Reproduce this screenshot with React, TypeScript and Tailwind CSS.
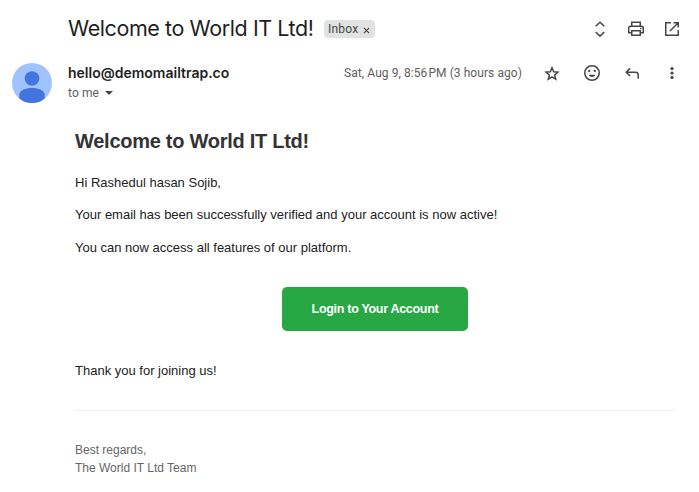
import type { ReactNode } from "react";

function Icon({ children }: { children: ReactNode }) {
  return (
    <svg viewBox="0 0 20 20" className="block size-5 shrink-0" fill="none" stroke="#444746" strokeWidth="1.5">
      {children}
    </svg>
  );
}

function SubjectBar() {
  return (
    <header className="flex h-[58px] items-center pl-[68px] pr-[17px]">
      <h1 className="w-[256px] whitespace-nowrap pb-0.5 font-['Inter','Liberation_Sans',sans-serif] text-[21.5px] font-normal leading-7 tracking-[-0.42px] text-[#1f1f1f]">
        Welcome to World IT Ltd!
      </h1>
      <span className="flex h-[18px] w-[51px] items-center rounded bg-[#e0e3e1] pl-1 font-['Roboto',sans-serif] text-xs text-[#444746]">
        <span className="w-[35px] tracking-[0.2px]">Inbox</span>
        <svg viewBox="0 0 8 8" className="mt-0.5 size-[7px]" fill="none" stroke="#444746" strokeWidth="1.3">
          <path d="M1 1 7 7M7 1 1 7" />
        </svg>
      </span>
      <div className="ml-auto flex gap-4">
        <Icon>
          <path d="M5.7 7.3 10 3.2 14.3 7.3M5.7 13 10 17.1 14.3 13" />
        </Icon>
        <Icon>
          <path d="M5.75 7V3.25h8.5V7M5.5 13.75H2.75V9q0-1.75 1.75-1.75h11Q17.25 7.25 17.25 9v4.75H14.5M5.75 11.75h8.5v4.5h-8.5z" />
          <path d="M14 9.5h1.5" />
        </Icon>
        <Icon>
          <path d="M9 3.75H3.75v12.5h12.5V11M11.5 3.75h4.75V8.5M16 4 8 12" />
        </Icon>
      </div>
    </header>
  );
}

function SenderRow() {
  return (
    <section className="flex h-[55px] pl-3 pr-[17px]">
      <svg viewBox="0 0 40 40" className="mt-[5px] size-10 shrink-0">
        <circle cx="20" cy="20" r="20" fill="#a0c3ff" />
        <circle cx="20" cy="15.5" r="7.3" fill="#4374e0" />
        <path d="M7.3 35.4V32c0-4.5 6-7 12.7-7s12.7 2.5 12.7 7v3.4A20 20 0 0 1 20 40a20 20 0 0 1-12.7-4.6Z" fill="#4374e0" />
      </svg>
      <div className="ml-4 whitespace-nowrap pt-[5px] font-['Roboto',sans-serif]">
        <div className="font-['Inter',sans-serif] text-sm font-semibold leading-5 text-[#1f1f1f]">hello@demomailtrap.co</div>
        <div className="flex items-center text-xs leading-5 tracking-[0.1px] text-[#5e5e5e]">
          <span className="w-[37px]">to me</span>
          <svg viewBox="0 0 8 4" className="h-1 w-2">
            <path d="M0 0h8L4 4Z" fill="#444746" />
          </svg>
        </div>
      </div>
      <div className="ml-auto flex h-5 whitespace-nowrap pt-[5px]">
        <span className="mr-5 font-['Roboto',sans-serif] text-xs leading-5 tracking-[0.07px] text-[#5e5e5e]">
          Sat, Aug 9, 8:56<span className="ml-px">PM</span> (3 hours ago)
        </span>
        <div className="flex gap-5">
          <Icon>
            <path d="m10 4.7 1.7 4 4.2.4-3.2 2.8 1 4.2-3.7-2.2-3.7 2.2 1-4.2-3.2-2.8 4.2-.4Z" />
          </Icon>
          <Icon>
            <circle cx="10" cy="10" r="7.25" />
            <g fill="#444746" stroke="none">
              <circle cx="7.2" cy="8" r="1.15" />
              <circle cx="12.8" cy="8" r="1.15" />
              <path d="M6.5 11.8h7q-1 2.3-3.5 2.3t-3.5-2.3Z" />
            </g>
          </Icon>
          <Icon>
            <path d="M8 5.4 4.2 9.2 8 13M4.3 9.2h9.3q2.65 0 2.65 2.8v3.8" />
          </Icon>
          <Icon>
            <g fill="#444746" stroke="none">
              <circle cx="10" cy="5.6" r="1.6" />
              <circle cx="10" cy="10" r="1.6" />
              <circle cx="10" cy="14.4" r="1.6" />
            </g>
          </Icon>
        </div>
      </div>
    </section>
  );
}

function MessageBody() {
  return (
    <article className="w-[675px] whitespace-nowrap pl-[75px] pt-[13px] text-[13px] leading-5 text-[#222222]">
      <h2 className="text-[20px] font-bold leading-[30px] tracking-[-0.27px] text-[#333333]">Welcome to World IT Ltd!</h2>
      <p className="mt-[17px]">Hi Rashedul hasan Sojib,</p>
      <p className="mt-3">Your email has been successfully verified and your account is now active!</p>
      <p className="mt-[13px]">You can now access all features of our platform.</p>
      <a className="mx-auto mt-[29px] flex h-11 w-[186px] items-center justify-center rounded-[5px] bg-[#28a745] text-[12.5px] font-bold tracking-[-0.3px] text-white">
        Login to Your Account
      </a>
      <p className="mt-[30px]">Thank you for joining us!</p>
      <hr className="mt-[29px] border-t border-[#eeeeee]" />
      <p className="mt-[30px] text-xs leading-[18px] text-[#666666]">
        Best regards,
        <br />
        The World IT Ltd Team
      </p>
    </article>
  );
}

export default function App() {
  return (
    <main className="h-[492px] w-[699px] overflow-hidden bg-white font-['Liberation_Sans',Arial,sans-serif]">
      <SubjectBar />
      <SenderRow />
      <MessageBody />
    </main>
  );
}
